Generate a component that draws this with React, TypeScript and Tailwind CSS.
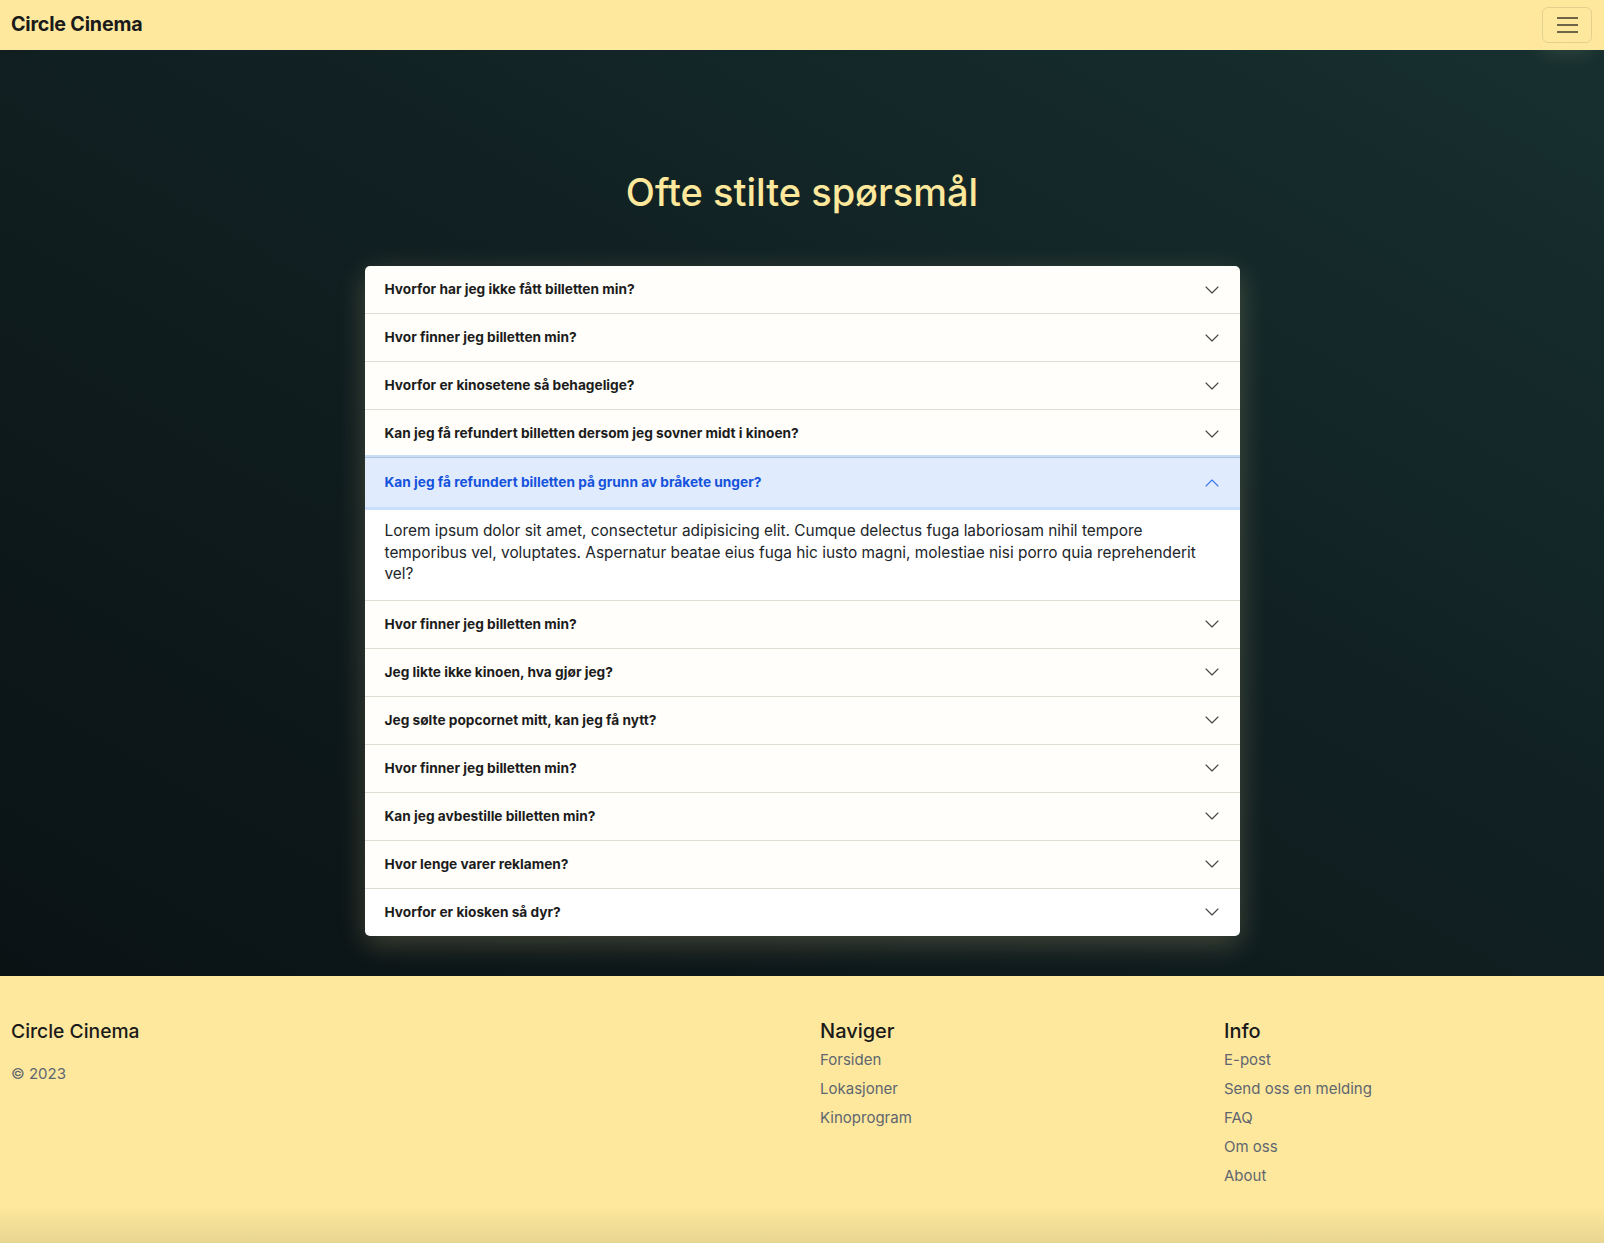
const questions = [
  "Hvorfor har jeg ikke fått billetten min?",
  "Hvor finner jeg billetten min?",
  "Hvorfor er kinosetene så behagelige?",
  "Kan jeg få refundert billetten dersom jeg sovner midt i kinoen?",
  "Kan jeg få refundert billetten på grunn av bråkete unger?",
  "Hvor finner jeg billetten min?",
  "Jeg likte ikke kinoen, hva gjør jeg?",
  "Jeg sølte popcornet mitt, kan jeg få nytt?",
  "Hvor finner jeg billetten min?",
  "Kan jeg avbestille billetten min?",
  "Hvor lenge varer reklamen?",
  "Hvorfor er kiosken så dyr?",
];

const openIndex = 4;

function Chevron({ up, color }: { up?: boolean; color: string }) {
  return (
    <svg width="16" height="16" viewBox="0 0 16 16" fill="none" className="shrink-0">
      <path
        d={up ? "M2 11l6-6 6 6" : "M2 5l6 6 6-6"}
        stroke={color}
        strokeWidth="1.1"
        strokeLinecap="round"
        strokeLinejoin="round"
      />
    </svg>
  );
}

function FaqItem({ q, open, last }: { q: string; open: boolean; last: boolean }) {
  if (open) {
    return (
      <div className="border-b border-[#deddd3]">
        <div className="relative z-10 flex h-[49px] items-center justify-between bg-[#e0ecfd] px-5 shadow-[0_0_0_3px_rgba(13,110,253,0.22)]">
          <span className="text-[13.7px] font-bold text-[#1552dc]">{q}</span>
          <Chevron up color="#3c78e8" />
        </div>
        <div className="bg-white px-5 pt-[13px] pb-[15px] text-[15.4px] leading-[21.5px] whitespace-nowrap text-[#212529]">
          Lorem ipsum dolor sit amet, consectetur adipisicing elit. Cumque delectus fuga laboriosam nihil tempore
          <br />
          temporibus vel, voluptates. Aspernatur beatae eius fuga hic iusto magni, molestiae nisi porro quia reprehenderit
          <br />
          vel?
        </div>
      </div>
    );
  }
  return (
    <div
      className={
        last
          ? "flex h-[47px] items-center justify-between bg-white px-5"
          : "flex h-[48px] items-center justify-between border-b border-[#deddd3] bg-[#fffefa] px-5"
      }
    >
      <span className="text-[13.7px] font-bold text-[#1c1c1c]">{q}</span>
      <Chevron color="#444" />
    </div>
  );
}

export default function App() {
  return (
    <div className="min-h-[1243px] font-['Inter',sans-serif]">
      <nav className="flex h-[50px] items-center justify-between bg-[#fee89d] pr-3 pl-[11px]">
        <span className="text-[19.7px] font-bold tracking-[-0.2px] text-[#1a1a1a]">Circle Cinema</span>
        <button className="flex h-[36px] w-[50px] flex-col items-center justify-center gap-[5px] rounded-md border border-[rgba(0,0,0,0.1)] shadow-[0_10px_20px_rgba(255,240,180,0.12)]">
          <span className="h-[2px] w-[21px] bg-[#6e6448]" />
          <span className="h-[2px] w-[21px] bg-[#6e6448]" />
          <span className="h-[2px] w-[21px] bg-[#6e6448]" />
        </button>
      </nav>

      <main className="flex h-[926px] flex-col items-center bg-[linear-gradient(to_bottom_left,#17302f_0%,#112022_45%,#0a1214_100%)] pt-[119px]">
        <h1 className="mb-[51px] h-[46px] text-[38px] leading-[46px] font-medium text-[#fee89c]">
          Ofte stilte spørsmål
        </h1>
        <div className="w-[875px] overflow-hidden rounded-[5px] shadow-[0_8px_28px_rgba(254,232,158,0.22)]">
          {questions.map((q, i) => (
            <FaqItem key={i} q={q} open={i === openIndex} last={i === questions.length - 1} />
          ))}
        </div>
      </main>

      <footer className="flex h-[267px] bg-[linear-gradient(to_bottom,#fee89d_0%,#fee89d_86%,#e8d590_100%)] pt-[42px] pl-[11px]">
        <div className="w-[809px]">
          <h5 className="text-[19.3px] leading-[26px] font-medium text-[#1a1a1a]">Circle Cinema</h5>
          <p className="mt-[19px] text-[15px] text-[#5f6670]">© 2023</p>
        </div>
        <div className="w-[404px]">
          <h5 className="text-[20px] leading-[26px] font-medium text-[#1a1a1a]">Naviger</h5>
          <ul className="mt-[1px] flex flex-col text-[15px] leading-[29px] text-[#5f6670]">
            <li>Forsiden</li>
            <li>Lokasjoner</li>
            <li>Kinoprogram</li>
          </ul>
        </div>
        <div>
          <h5 className="text-[20px] leading-[26px] font-medium text-[#1a1a1a]">Info</h5>
          <ul className="mt-[1px] flex flex-col text-[15px] leading-[29px] text-[#5f6670]">
            <li>E-post</li>
            <li>Send oss en melding</li>
            <li>FAQ</li>
            <li>Om oss</li>
            <li>About</li>
          </ul>
        </div>
      </footer>
    </div>
  );
}
